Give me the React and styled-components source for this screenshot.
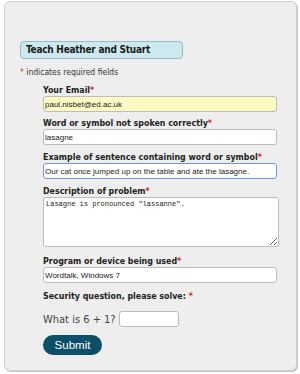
import React from "react";
import styled, { createGlobalStyle } from "styled-components";

const Global = createGlobalStyle`
  html, body { margin: 0; padding: 0; background: #fff; }
  body { font-family: "DejaVu Sans Condensed", "DejaVu Sans", sans-serif; }
`;

const Page = styled.div`
  padding: 1px 3px 3px 4px;
`;

const Card = styled.div`
  box-sizing: border-box;
  width: 293px;
  height: 370px;
  background: #eeeeee;
  border: 1px solid #cfcfcf;
  border-radius: 6px;
  box-shadow: 1px 1px 0 #c4c4c4;
  padding: 39px 0 0 15px;
`;

const TitleBox = styled.div`
  box-sizing: border-box;
  width: 163px;
  height: 18px;
  background: #cde8ef;
  border: 1px solid #98bac4;
  border-radius: 4px;
  padding-left: 5px;
  font-weight: bold;
  font-size: 10px;
  letter-spacing: -0.25px;
  line-height: 16px;
  color: #1c1c1c;
`;

const Note = styled.div`
  margin-top: 7px;
  font-size: 8.5px;
  line-height: 12px;
  color: #333;
`;

const Star = styled.span`
  color: #d22;
  font-weight: ${(p) => (p.$bold ? "bold" : "normal")};
`;

const Fields = styled.div`
  margin-top: 6px;
  padding-left: 23px;
  display: flex;
  flex-direction: column;
`;

const Group = styled.div`
  display: flex;
  flex-direction: column;
  margin-bottom: ${(p) => p.$gap ?? 6}px;
`;

const Label = styled.label`
  font-size: 8.8px;
  font-weight: bold;
  line-height: 12px;
  color: #222;
`;

const TextInput = styled.input`
  box-sizing: border-box;
  width: ${(p) => p.$w ?? 234}px;
  height: 16px;
  margin: 0;
  padding: 0 2px 0 1px;
  border: 1px solid ${(p) => (p.$focus ? "#6f9ad6" : "#bcbcbc")};
  border-radius: 3px;
  background: ${(p) => (p.$yellow ? "#fbfbc3" : "#fff")};
  font-family: "Liberation Sans", Arial, sans-serif;
  font-size: 8px;
  color: #222;
  outline: none;
`;

const TextArea = styled.textarea`
  box-sizing: border-box;
  width: 236px;
  height: 50px;
  margin: 0;
  padding: 2px 2px;
  border: 1px solid #bcbcbc;
  border-radius: 3px;
  background: #fff;
  font-family: "Liberation Mono", "Courier New", monospace;
  font-size: 7px;
  line-height: 9px;
  color: #222;
  outline: none;
`;

const Question = styled.div`
  margin-top: 9px;
  display: flex;
  align-items: center;
  gap: 3px;
  font-size: 11px;
  color: #444;
  height: 16px;
`;

const SubmitButton = styled.button`
  margin-top: 8px;
  align-self: flex-start;
  width: 59px;
  height: 20px;
  border: none;
  border-radius: 10px;
  background: #0b5068;
  color: #fff;
  font-family: "Liberation Sans", Arial, sans-serif;
  font-size: 11.5px;
  padding: 0;
  cursor: pointer;
`;

export default function App() {
  return (
    <Page>
      <Global />
      <Card>
        <TitleBox>Teach Heather and Stuart</TitleBox>
        <Note>
          <Star>*</Star> indicates required fields
        </Note>
        <Fields>
          <Group $gap={5}>
            <Label>
              Your Email<Star $bold>*</Star>
            </Label>
            <TextInput $yellow defaultValue="paul.nisbet@ed.ac.uk" />
          </Group>
          <Group>
            <Label>
              Word or symbol not spoken correctly<Star $bold>*</Star>
            </Label>
            <TextInput defaultValue="lasagne" />
          </Group>
          <Group>
            <Label>
              Example of sentence containing word or symbol<Star $bold>*</Star>
            </Label>
            <TextInput
              $focus
              defaultValue="Our cat once jumped up on the table and ate the lasagne."
            />
          </Group>
          <Group $gap={8}>
            <Label>
              Description of problem<Star $bold>*</Star>
            </Label>
            <TextArea defaultValue={'Lasagne is pronounced "lassanne".'} />
          </Group>
          <Group $gap={7}>
            <Label>
              Program or device being used<Star $bold>*</Star>
            </Label>
            <TextInput defaultValue="Wordtalk, Windows 7" />
          </Group>
          <Label>
            Security question, please solve: <Star $bold>*</Star>
          </Label>
          <Question>
            What is 6 + 1? <TextInput $w={60} />
          </Question>
          <SubmitButton type="button">Submit</SubmitButton>
        </Fields>
      </Card>
    </Page>
  );
}
